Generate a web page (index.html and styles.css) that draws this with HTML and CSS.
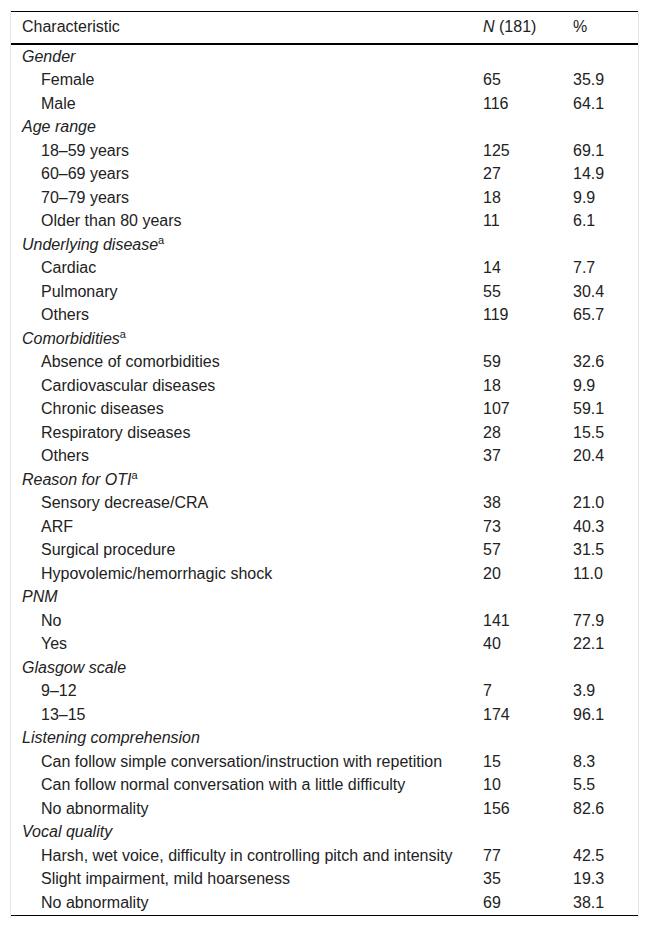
FILE: index.html
```html
<!DOCTYPE html>
<html>
<head>
<meta charset="utf-8">
<link rel="stylesheet" href="styles.css">
</head>
<body>
<div class="wrap">
<table class="tbl">
<colgroup><col class="c1"><col class="c2"><col class="c3"></colgroup>
<thead>
<tr><th>Characteristic</th><th><i>N</i> (181)</th><th>%</th></tr>
</thead>
<tbody>
<tr class="cat"><td colspan="3"><i>Gender</i></td></tr>
<tr><td class="ind">Female</td><td>65</td><td>35.9</td></tr>
<tr><td class="ind">Male</td><td>116</td><td>64.1</td></tr>
<tr class="cat"><td colspan="3"><i>Age range</i></td></tr>
<tr><td class="ind">18–59 years</td><td>125</td><td>69.1</td></tr>
<tr><td class="ind">60–69 years</td><td>27</td><td>14.9</td></tr>
<tr><td class="ind">70–79 years</td><td>18</td><td>9.9</td></tr>
<tr><td class="ind">Older than 80 years</td><td>11</td><td>6.1</td></tr>
<tr class="cat"><td colspan="3"><i>Underlying disease</i><sup>a</sup></td></tr>
<tr><td class="ind">Cardiac</td><td>14</td><td>7.7</td></tr>
<tr><td class="ind">Pulmonary</td><td>55</td><td>30.4</td></tr>
<tr><td class="ind">Others</td><td>119</td><td>65.7</td></tr>
<tr class="cat"><td colspan="3"><i>Comorbidities</i><sup>a</sup></td></tr>
<tr><td class="ind">Absence of comorbidities</td><td>59</td><td>32.6</td></tr>
<tr><td class="ind">Cardiovascular diseases</td><td>18</td><td>9.9</td></tr>
<tr><td class="ind">Chronic diseases</td><td>107</td><td>59.1</td></tr>
<tr><td class="ind">Respiratory diseases</td><td>28</td><td>15.5</td></tr>
<tr><td class="ind">Others</td><td>37</td><td>20.4</td></tr>
<tr class="cat"><td colspan="3"><i>Reason for OTI</i><sup>a</sup></td></tr>
<tr><td class="ind">Sensory decrease/CRA</td><td>38</td><td>21.0</td></tr>
<tr><td class="ind">ARF</td><td>73</td><td>40.3</td></tr>
<tr><td class="ind">Surgical procedure</td><td>57</td><td>31.5</td></tr>
<tr><td class="ind">Hypovolemic/hemorrhagic shock</td><td>20</td><td>11.0</td></tr>
<tr class="cat"><td colspan="3"><i>PNM</i></td></tr>
<tr><td class="ind">No</td><td>141</td><td>77.9</td></tr>
<tr><td class="ind">Yes</td><td>40</td><td>22.1</td></tr>
<tr class="cat"><td colspan="3"><i>Glasgow scale</i></td></tr>
<tr><td class="ind">9–12</td><td>7</td><td>3.9</td></tr>
<tr><td class="ind">13–15</td><td>174</td><td>96.1</td></tr>
<tr class="cat"><td colspan="3"><i>Listening comprehension</i></td></tr>
<tr><td class="ind">Can follow simple conversation/instruction with repetition</td><td>15</td><td>8.3</td></tr>
<tr><td class="ind">Can follow normal conversation with a little difficulty</td><td>10</td><td>5.5</td></tr>
<tr><td class="ind">No abnormality</td><td>156</td><td>82.6</td></tr>
<tr class="cat"><td colspan="3"><i>Vocal quality</i></td></tr>
<tr><td class="ind">Harsh, wet voice, difficulty in controlling pitch and intensity</td><td>77</td><td>42.5</td></tr>
<tr><td class="ind">Slight impairment, mild hoarseness</td><td>35</td><td>19.3</td></tr>
<tr><td class="ind">No abnormality</td><td>69</td><td>38.1</td></tr>
</tbody>
</table>
</div>
</body>
</html>
```
FILE: styles.css
```css
html, body {
  margin: 0;
  padding: 0;
  background: #fff;
}
body {
  font-family: "Liberation Sans", Arial, sans-serif;
  font-size: 16px;
  color: #222;
}
.wrap {
  margin: 10px 0 0 10px;
  width: 627px;
  padding: 1px 0 2px 0;
  border-left: 1px solid #e6e6e6;
  border-right: 1px solid #e6e6e6;
}
.tbl {
  width: 627px;
  border-collapse: collapse;
  border-top: 1px solid #000;
  border-bottom: 1px solid #000;
  table-layout: fixed;
}
.c1 { width: 461px; }
.c2 { width: 90px; }
.c3 { width: 76px; }
.tbl th {
  font-weight: normal;
  text-align: left;
  padding: 6px 0 7px 11px;
  line-height: 18px;
  border-bottom: 2px solid #000;
}
.tbl td {
  padding: 2.5px 0 2.5px 11px;
  line-height: 18.5px;
  vertical-align: middle;
  white-space: nowrap;
}
.tbl td.ind {
  padding-left: 30px;
}
.tbl sup {
  font-size: 11px;
  line-height: 0;
  vertical-align: 6px;
}
```
